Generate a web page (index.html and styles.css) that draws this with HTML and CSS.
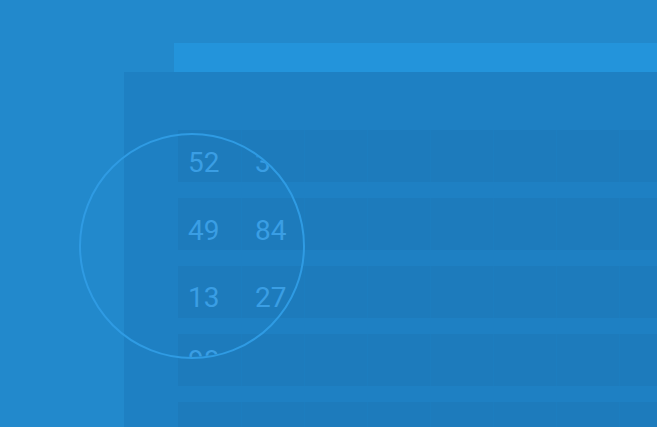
FILE: index.html
```html
<!DOCTYPE html>
<html>
<head>
<meta charset="utf-8">
<link rel="stylesheet" href="styles.css">
</head>
<body>
<div class="scene">
  <div class="topbar"></div>
  <div class="panel">
    <div class="row"><div class="cell"></div><div class="cell"></div><div class="cell"></div><div class="cell"></div><div class="cell"></div><div class="cell"></div><div class="cell"></div><div class="cell"></div></div>
    <div class="row"><div class="cell"></div><div class="cell"></div><div class="cell"></div><div class="cell"></div><div class="cell"></div><div class="cell"></div><div class="cell"></div><div class="cell"></div></div>
    <div class="row"><div class="cell"></div><div class="cell"></div><div class="cell"></div><div class="cell"></div><div class="cell"></div><div class="cell"></div><div class="cell"></div><div class="cell"></div></div>
    <div class="row"><div class="cell"></div><div class="cell"></div><div class="cell"></div><div class="cell"></div><div class="cell"></div><div class="cell"></div><div class="cell"></div><div class="cell"></div></div>
    <div class="row"><div class="cell"></div><div class="cell"></div><div class="cell"></div><div class="cell"></div><div class="cell"></div><div class="cell"></div><div class="cell"></div><div class="cell"></div></div>
  </div>
  <div class="lens">
    <div class="nums">
      <span>52</span><span>35</span>
      <span>49</span><span>84</span>
      <span>13</span><span>27</span>
      <span class="last">98</span><span class="last">61</span>
    </div>
  </div>
</div>
</body>
</html>
```

FILE: styles.css
```css
html, body {
  margin: 0;
  padding: 0;
  background: #2289cc;
  overflow: hidden;
}
.scene {
  position: relative;
  width: 657px;
  height: 427px;
  overflow: hidden;
  background: #2289cc;
}
.topbar {
  margin: 43px 0 0 174px;
  height: 29px;
  background: #2394db;
}
.panel {
  margin-left: 124px;
  height: 355px;
  background: #1e80c3;
  padding: 58px 0 0 54px;
  box-sizing: border-box;
  display: flex;
  flex-direction: column;
  gap: 16px;
}
.row {
  display: flex;
  height: 52px;
  flex: none;
}
.cell {
  width: 63px;
  flex: none;
  box-sizing: border-box;
  background: #1d7bbc;
  border-left: 1px solid #1c7dbf;
}
.cell:first-child {
  border-left: none;
}
.lens {
  position: absolute;
  left: 79px;
  top: 133px;
  width: 226px;
  height: 226px;
  box-sizing: border-box;
  border: 2px solid #2f9be3;
  border-radius: 50%;
  overflow: hidden;
}
.nums {
  display: grid;
  grid-template-columns: 67px 67px;
  grid-auto-rows: 67.5px;
  padding: 14px 0 0 107px;
  font-family: Roboto, "Liberation Sans", sans-serif;
  font-weight: 400;
  font-size: 28px;
  line-height: 28px;
  color: #3a9ee4;
}
.nums span {
  display: block;
}
.nums .last {
  margin-top: -5px;
}
```
